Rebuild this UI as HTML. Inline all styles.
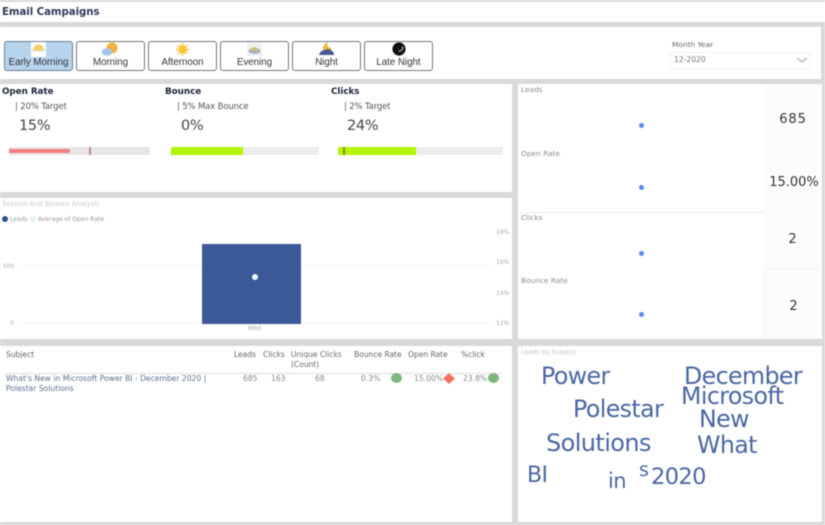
<!DOCTYPE html>
<html><head><meta charset="utf-8"><title>Email Campaigns</title>
<style>
html,body{margin:0;padding:0;width:825px;height:525px;overflow:hidden;background:#fff}
#r{position:absolute;left:0;top:0;width:825px;height:525px;background:#d9d9d9;font-family:"DejaVu Sans","Liberation Sans",sans-serif;filter:blur(.45px);overflow:hidden}
#r div,#r span.a{position:absolute;white-space:nowrap}
.p{background:#fff}
.b{top:41px;width:67px;height:28px;background:#fff;border:1px solid #777;border-radius:3px;box-sizing:content-box}
.bt{left:0;right:0;top:15px;text-align:center;font:9.7px/12px "Liberation Sans",sans-serif;color:#333}
.h{font:bold 8.8px/12px "DejaVu Sans",sans-serif;color:#1d2238;letter-spacing:-.05px}
.s{font:8.5px/12px "DejaVu Sans",sans-serif;color:#555;letter-spacing:-.15px}
.n{font:14.5px/18px "DejaVu Sans",sans-serif;color:#444;letter-spacing:-.3px}
.g{font:6px/8px "DejaVu Sans",sans-serif;color:#aaa}
.l{font:7.4px/10px "DejaVu Sans",sans-serif;color:#8a8a8a;letter-spacing:0}
.v{font:13px/16px "DejaVu Sans",sans-serif;color:#333;text-align:center;letter-spacing:.9px}
.dot{width:5px;height:5px;background:#4f8df0;border-radius:50%;left:639px}
.t{font:7.6px/10px "DejaVu Sans",sans-serif;color:#666;letter-spacing:-.05px}
.d{font:7.6px/10px "DejaVu Sans",sans-serif;color:#888;letter-spacing:0}
.w{font-family:"DejaVu Sans","Liberation Sans",sans-serif;color:#4a67a3;line-height:1;letter-spacing:-.6px}
</style></head><body><div id="r">

<div class="p" style="left:0;top:2px;width:825px;height:20px"></div>
<div class="h" style="left:2px;top:8px;font-size:10.2px;color:#2d3a55;line-height:10px">Email Campaigns</div>

<div class="p" style="left:0;top:27px;width:821px;height:52px"></div>

<div class="b" style="left:4px;background:#b7d3ee;border-color:#6c7f92"><div class="bt">Early Morning</div>
<svg style="position:absolute;left:26px;top:0" width="15" height="15"><rect width="15" height="15" fill="#fff"/><path d="M2 8A5.500 5.500 0 0 1 13 8Z" fill="#f2cf68"/><rect x="1" y="8" width="13" height="1.500" fill="#e8dcc0"/></svg></div>

<div class="b" style="left:76px"><div class="bt">Morning</div>
<svg style="position:absolute;left:24px;top:0" width="18" height="15"><circle cx="11" cy="6" r="5.500" fill="#f0b23c"/><ellipse cx="6" cy="10" rx="5.500" ry="3.800" fill="#a9c6e8"/></svg></div>

<div class="b" style="left:148px"><div class="bt">Afternoon</div>
<svg style="position:absolute;left:26px;top:0" width="15" height="15"><g stroke="#f7c233" stroke-width="1.400"><path d="M7.500 1V14M1 7.500H14M3 3L12 12M12 3L3 12"/></g><circle cx="7.500" cy="7.500" r="4" fill="#fbc531"/></svg></div>

<div class="b" style="left:220px"><div class="bt">Evening</div>
<svg style="position:absolute;left:26px;top:0" width="15" height="14"><rect width="15" height="14" fill="#eef1ee"/><ellipse cx="7.500" cy="9" rx="6" ry="2.800" fill="#a5b4b8"/><path d="M4 8.500A3.500 3.500 0 0 1 11 8.500Z" fill="#cfc474"/></svg></div>

<div class="b" style="left:292px"><div class="bt">Night</div>
<svg style="position:absolute;left:26px;top:0" width="16" height="15"><path d="M9 0C7 3 9 6 13 6C12 9 6 10 4 7C4 4 6 1 9 0Z" fill="#e8b93a"/><path d="M0 13C1 9 4 8 6 8C9 6 12 8 13 9C15 10 15 12 15 13Z" fill="#46598f"/></svg></div>

<div class="b" style="left:364px"><div class="bt">Late Night</div>
<svg style="position:absolute;left:26px;top:0" width="15" height="15"><circle cx="8" cy="7" r="6.600" fill="#111"/><path d="M7.500 9A3.400 3.400 0 0 0 11.500 4.500" stroke="#aaa" stroke-width="1.300" fill="none"/></svg></div>

<div class="g" style="left:672px;top:40px;font-size:7.4px;line-height:9px;color:#666">Month Year</div>
<div style="left:670px;top:52px;width:138px;height:15px;background:#fff;border:1px solid #f0f0f0"></div>
<div class="g" style="left:674px;top:55px;font-size:7.6px;line-height:10px;color:#777">12-2020</div>
<svg style="position:absolute;left:796px;top:57px" width="12" height="6"><path d="M1 1L6 5L11 1" fill="none" stroke="#999" stroke-width=".9"/></svg>

<div class="p" style="left:0;top:84px;width:512px;height:108px"></div>
<div class="h" style="left:2px;top:86px">Open Rate</div>
<div class="h" style="left:165px;top:86px">Bounce</div>
<div class="h" style="left:331px;top:86px">Clicks</div>
<div class="s" style="left:15px;top:101px">| 20% Target</div>
<div class="s" style="left:177px;top:101px">| 5% Max Bounce</div>
<div class="s" style="left:344px;top:101px">| 2% Target</div>
<div class="n" style="left:19px;top:117px">15%</div>
<div class="n" style="left:181px;top:117px">0%</div>
<div class="n" style="left:347px;top:117px">24%</div>

<div style="left:9px;top:147px;width:141px;height:8px;background:#e6e6e6"></div>
<div style="left:9px;top:149px;width:61px;height:4px;background:#f57f7c"></div>
<div style="left:89px;top:147px;width:1.500px;height:8px;background:#c98686"></div>

<div style="left:171px;top:147px;width:148px;height:8px;background:#ececec"></div>
<div style="left:171px;top:147px;width:72px;height:8px;background:#b2f500"></div>

<div style="left:338px;top:147px;width:165px;height:8px;background:#ececec"></div>
<div style="left:338px;top:147px;width:78px;height:8px;background:#b2f500"></div>
<div style="left:343px;top:147px;width:2px;height:8px;background:#8f8a10"></div>

<div class="p" style="left:0;top:198px;width:512px;height:141px"></div>
<div class="g" style="left:2px;top:200px;color:#c8c8c8;font-size:6.700px">Session And Bounce Analysis</div>
<div style="left:2px;top:216px;width:6px;height:6px;border-radius:50%;background:#2f4f93"></div>
<div class="g" style="left:10px;top:216px;font-size:6px;color:#999">Leads</div>
<div style="left:30px;top:216px;width:6px;height:6px;border-radius:50%;background:#dff0f5"></div>
<div class="g" style="left:38px;top:216px;font-size:6px;color:#999">Average of Open Rate</div>

<div style="left:20px;top:265px;width:470px;height:1px;background:#f3f3f3"></div>
<div style="left:20px;top:323px;width:470px;height:1px;background:#f3f3f3"></div>
<div style="left:202px;top:244px;width:99px;height:80px;background:#3b5998"></div>
<div style="left:251.500px;top:274px;width:6px;height:6px;border-radius:50%;background:#f4fbff"></div>
<div class="g" style="left:248px;top:325px">Wed</div>
<div class="g" style="left:3px;top:263px">500</div>
<div class="g" style="left:10px;top:320px">0</div>
<div class="g" style="left:496px;top:229px">18%</div>
<div class="g" style="left:496px;top:259px">16%</div>
<div class="g" style="left:496px;top:290px">14%</div>
<div class="g" style="left:496px;top:320px">12%</div>

<div class="p" style="left:0;top:346px;width:512px;height:176px"></div>
<div class="t" style="left:6px;top:350px">Subject</div>
<div class="t" style="left:234px;top:350px">Leads</div>
<div class="t" style="left:263px;top:350px">Clicks</div>
<div class="t" style="left:291px;top:350px">Unique Clicks<br>(Count)</div>
<div class="t" style="left:354px;top:350px">Bounce Rate</div>
<div class="t" style="left:408px;top:350px">Open Rate</div>
<div class="t" style="left:461px;top:350px">%click</div>
<div style="left:6px;top:373px;width:496px;height:1px;background:#ddd"></div>
<div class="d" style="left:6px;top:374px;color:#5c6f8f;line-height:10px">What's New in Microsoft Power BI - December 2020 |<br>Polestar Solutions</div>
<div class="d" style="left:243px;top:374px">685</div>
<div class="d" style="left:271px;top:374px">163</div>
<div class="d" style="left:315px;top:374px">68</div>
<div class="d" style="left:361px;top:374px">0.3%</div>
<div style="left:391px;top:373px;width:11px;height:10px;border-radius:50%;background:#7cb97e"></div>
<div class="d" style="left:414px;top:374px">15.00%</div>
<svg style="position:absolute;left:443px;top:373px" width="12" height="11"><path d="M6 0L12 5.500L6 11L0 5.500Z" fill="#f0735d"/></svg>
<div class="d" style="left:463px;top:374px">23.8%</div>
<div style="left:488px;top:373px;width:11px;height:10px;border-radius:50%;background:#7cb97e"></div>

<div class="p" style="left:518px;top:84px;width:304px;height:255px"></div>
<div style="left:764px;top:84px;width:58px;height:255px;background:#fcfcfc"></div>
<div style="left:518px;top:212px;width:246px;height:1px;background:#eaeaea"></div>
<div style="left:764px;top:268px;width:58px;height:1px;background:#f0f0f0"></div>
<div style="left:764px;top:268px;width:1px;height:71px;background:#f0f0f0"></div>
<div class="l" style="left:521px;top:85px">Leads</div>
<div class="l" style="left:521px;top:149px">Open Rate</div>
<div class="l" style="left:521px;top:213px">Clicks</div>
<div class="l" style="left:521px;top:276px">Bounce Rate</div>
<div class="dot" style="top:123px"></div>
<div class="dot" style="top:185px"></div>
<div class="dot" style="top:251px"></div>
<div class="dot" style="top:312px"></div>
<div class="v" style="left:764px;width:58px;top:112px">685</div>
<div class="v" style="left:764px;width:60px;top:175px;letter-spacing:0">15.00%</div>
<div class="v" style="left:764px;width:58px;top:232px">2</div>
<div class="v" style="left:765px;width:58px;top:299px">2</div>

<div class="p" style="left:518px;top:346px;width:304px;height:176px"></div>
<div class="g" style="left:521px;top:348px;font-size:6.400px;color:#c4c4c4">Leads by Subject</div>
<div class="w" style="left:541px;top:365px;font-size:23.700px">Power</div>
<div class="w" style="left:684px;top:365px;font-size:23.700px">December</div>
<div class="w" style="left:681px;top:385px;font-size:23.700px">Microsoft</div>
<div class="w" style="left:573px;top:398px;font-size:23.700px">Polestar</div>
<div class="w" style="left:699px;top:408px;font-size:23.700px">New</div>
<div class="w" style="left:546px;top:431px;font-size:24px">Solutions</div>
<div class="w" style="left:697px;top:434px;font-size:23.700px">What</div>
<div class="w" style="left:527px;top:465px;font-size:22px">BI</div>
<div class="w" style="left:608px;top:471px;font-size:21px">in</div>
<div class="w" style="left:639px;top:461px;font-size:19px">s</div>
<div class="w" style="left:651px;top:466px;font-size:22.500px">2020</div>
</div></body></html>
